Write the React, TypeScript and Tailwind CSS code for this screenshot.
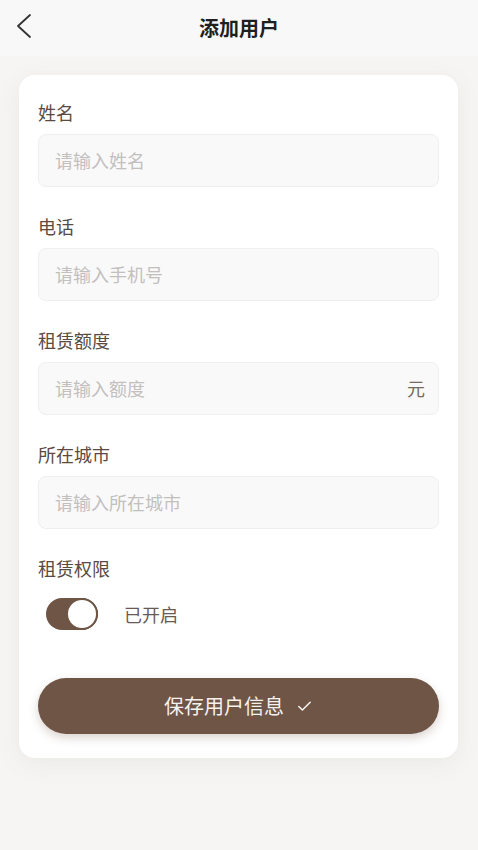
import React, { useState } from "react";
import { Check } from "lucide-react";

const fields = [
  { label: "姓名", placeholder: "请输入姓名" },
  { label: "电话", placeholder: "请输入手机号" },
  { label: "租赁额度", placeholder: "请输入额度", suffix: "元" },
  { label: "所在城市", placeholder: "请输入所在城市" },
];

const App = () => {
  const [enabled, setEnabled] = useState(true);

  return (
    <div
      className="min-h-[850px] w-full bg-[#f6f5f3] pb-10"
      style={{ fontFamily: '"Noto Sans CJK SC", "Noto Sans", sans-serif' }}
    >
      {/* Header */}
      <header className="relative flex h-[56px] items-center justify-center bg-[#f8f8f8]">
        <button className="absolute left-[14px] top-[12px] text-[#333]">
          <svg width="20" height="28" viewBox="0 0 20 28" fill="none">
            <polyline
              points="16,3 4,14 16,25"
              stroke="currentColor"
              strokeWidth="1.8"
              strokeLinecap="round"
              strokeLinejoin="round"
            />
          </svg>
        </button>
        <h1 className="text-[20px] font-bold text-[#1f1f1f]">添加用户</h1>
      </header>

      {/* Form card */}
      <div className="ml-[19px] mr-[20px] mt-[19px] rounded-[16px] bg-white px-[19px] pb-[24px] pt-[24px] shadow-[0_6px_24px_rgba(120,100,90,0.08)]">
        {fields.map((f) => (
          <div key={f.label} className="mb-[26px]">
            <label className="mb-[9px] block h-[26px] text-[18px] leading-[26px] text-[#5b4a41]">
              {f.label}
            </label>
            <div className="flex h-[53px] items-center rounded-[8px] border border-[#efefef] bg-[#f9f9f9] pl-4 pr-[13px]">
              <input
                className="w-full bg-transparent text-[18px] text-[#333] outline-none placeholder:text-[#c3bfbf]"
                placeholder={f.placeholder}
              />
              {f.suffix && <span className="text-[18px] text-[#7a6b62]">{f.suffix}</span>}
            </div>
          </div>
        ))}

        <div>
          <label className="block h-[26px] text-[18px] leading-[26px] text-[#5b4a41]">租赁权限</label>
          <div className="ml-[8px] mt-[17px] flex items-center gap-[26px]">
            <button
              onClick={() => setEnabled(!enabled)}
              className={`relative h-[32px] w-[52px] rounded-full ${enabled ? "bg-[#6e5546]" : "bg-[#ddd]"}`}
            >
              <span
                className={`absolute top-0 h-[32px] w-[32px] rounded-full border-[2px] border-[#6e5546] bg-white ${enabled ? "right-0" : "left-0"}`}
              />
            </button>
            <span className="text-[18px] text-[#6a5a51]">{enabled ? "已开启" : "已关闭"}</span>
          </div>
        </div>

        <button className="mt-[48px] flex h-[56px] w-full items-center justify-center gap-[12px] rounded-full bg-[#6e5546] text-[20px] text-[#f7f1ee] shadow-[0_4px_10px_rgba(110,85,70,0.25)]">
          保存用户信息
          <Check size={17} strokeWidth={2.2} />
        </button>
      </div>
    </div>
  );
};

export default App;
